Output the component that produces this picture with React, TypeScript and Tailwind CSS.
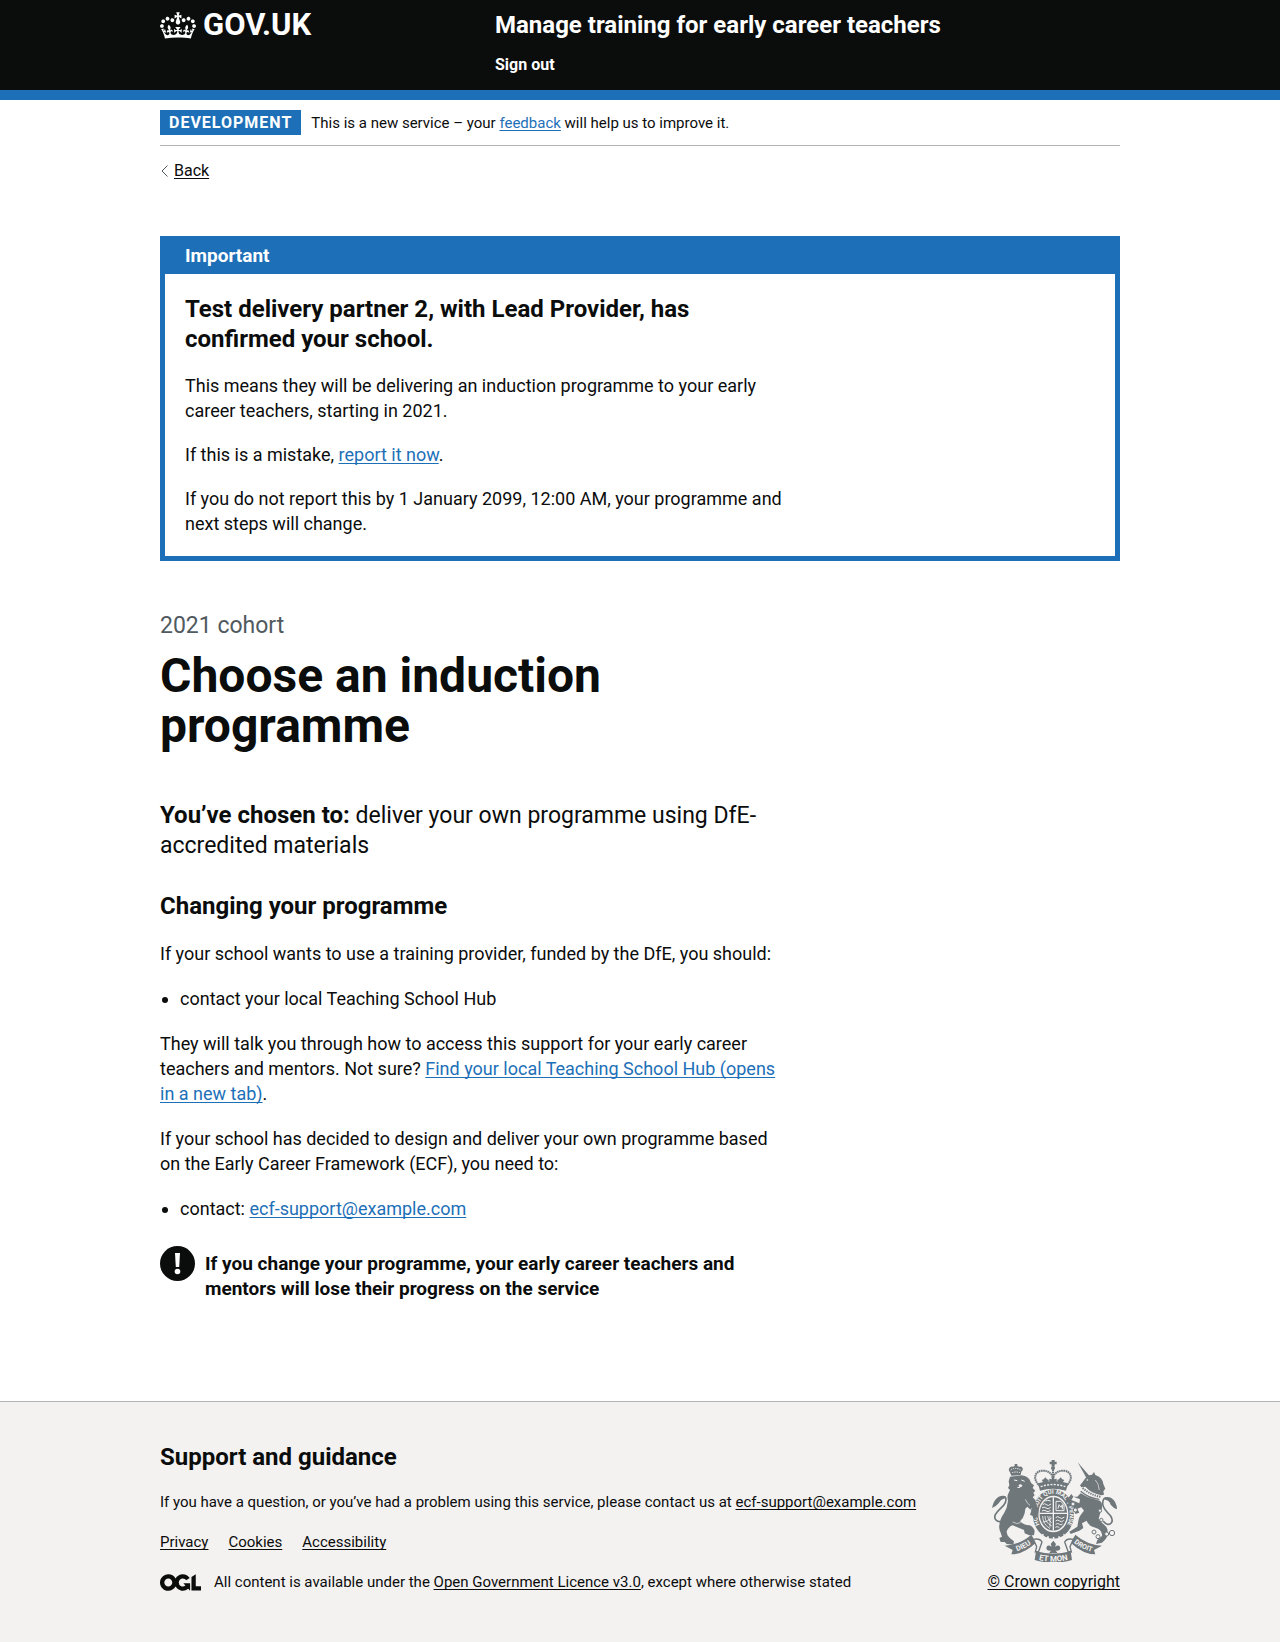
import React from "react";

const linkBlue = "text-[#1d70b8] underline underline-offset-2 decoration-1 [text-decoration-skip-ink:none]";
const linkBlack = "text-[#0b0c0c] underline underline-offset-2 decoration-1 [text-decoration-skip-ink:none]";

function Crown() {
  return (
    <svg aria-hidden="true" viewBox="0 0 132 97" className="h-[27px] w-9 fill-current">
      <path
        fillRule="evenodd"
        d="M25 30.2c3.5 1.5 7.7-.2 9.1-3.7 1.5-3.6-.2-7.8-3.9-9.2-3.6-1.4-7.6.3-9.1 3.9-1.4 3.5.3 7.5 3.9 9zM9 39.5c3.6 1.5 7.8-.2 9.2-3.7 1.5-3.6-.2-7.8-3.9-9.1-3.6-1.5-7.6.2-9.1 3.8-1.4 3.5.3 7.5 3.8 9zM4.4 57.2c3.5 1.5 7.7-.2 9.1-3.8 1.5-3.6-.2-7.7-3.9-9.1-3.5-1.5-7.6.3-9.1 3.8-1.4 3.5.3 7.6 3.9 9.1zm38.3-21.4c3.5 1.5 7.7-.2 9.1-3.8 1.5-3.6-.2-7.7-3.9-9.1-3.6-1.5-7.6.3-9.1 3.8-1.3 3.6.4 7.7 3.9 9.1zm64.4-5.6c-3.6 1.5-7.8-.2-9.1-3.7-1.5-3.6.2-7.8 3.8-9.2 3.6-1.4 7.7.3 9.2 3.9 1.3 3.5-.4 7.5-3.9 9zm15.9 9.3c-3.6 1.5-7.7-.2-9.1-3.7-1.5-3.6.2-7.8 3.7-9.1 3.6-1.5 7.7.2 9.2 3.8 1.5 3.5-.3 7.5-3.8 9zm4.7 17.7c-3.6 1.5-7.8-.2-9.2-3.8-1.5-3.6.2-7.7 3.9-9.1 3.6-1.5 7.7.3 9.2 3.8 1.3 3.5-.4 7.6-3.9 9.1zM89.3 35.8c-3.6 1.5-7.8-.2-9.2-3.8-1.4-3.6.2-7.7 3.9-9.1 3.6-1.5 7.7.3 9.2 3.8 1.4 3.6-.3 7.7-3.9 9.1zM69.7 17.7l8.9 4.7V9.3l-8.9 2.8c-.2-.3-.5-.6-.9-.9L72.4 0H59.6l3.5 11.2c-.3.3-.6.5-.9.9l-8.8-2.8v13.1l8.8-4.7c.3.3.6.7.9.9l-5 15.4v.1c-.2.8-.4 1.6-.4 2.4 0 4.1 3.1 7.5 7 8.1h.2c.3 0 .7.1 1 .1.4 0 .7 0 1-.1h.2c4-.6 7.1-4.1 7.1-8.1 0-.8-.1-1.7-.4-2.4V34l-5.1-15.4c.4-.2.7-.6 1-.9zM66 92.8c16.9 0 32.8 1.1 47.1 3.2 4-16.9 8.9-26.7 14-33.5l-9.6-3.4c1 4.9 1.1 7.2 0 10.2-1.5-1.4-3-4.3-4.2-8.7L108.6 76c2.8-2 5-3.2 7.5-3.3-4.4 9.4-10 11.9-13.6 11.2-4.3-.8-6.3-4.6-5.6-7.9 1-4.7 5.7-5.9 8-.5 4.3-8.7-3-11.4-7.6-8.8 7.1-7.2 7.9-13.5 2.1-21.1-8 6.1-8.1 12.3-4.5 20.8-4.7-5.4-12.1-2.5-9.5 6.2 3.4-5.2 7.9-2 7.2 3.1-.6 4.3-6.4 7.8-13.5 7.2-10.3-.9-10.9-8-11.2-13.8 2.5-.5 7.1 1.8 11 7.3L80.2 60c-4.1 4.4-8 5.3-12.3 5.4 1.4-4.4 8-11.6 8-11.6H55.5s6.4 7.2 7.9 11.6c-4.2-.1-8-1-12.3-5.4l1.4 16.4c3.9-5.5 8.5-7.7 10.9-7.3-.3 5.8-.9 12.8-11.1 13.8-7.2.6-12.9-2.9-13.5-7.2-.7-5 3.8-8.3 7.1-3.1 2.7-8.7-4.6-11.6-9.4-6.2 3.7-8.5 3.6-14.7-4.6-20.8-5.8 7.6-5 13.9 2.2 21.1-4.7-2.6-11.9.1-7.7 8.8 2.3-5.5 7.1-4.2 8.1.5.7 3.3-1.3 7.1-5.7 7.9-3.5.7-9-1.8-13.5-11.2 2.5.1 4.7 1.3 7.5 3.3l-4.7-15.4c-1.2 4.4-2.7 7.2-4.3 8.7-1.1-3-.9-5.3 0-10.2l-9.5 3.4c5 6.9 9.9 16.7 14 33.5 14.8-2.1 30.8-3.2 47.7-3.2z"
      />
    </svg>
  );
}

function OglLogo() {
  return (
    <svg aria-hidden="true" viewBox="0 0 483.2 195.7" className="h-[17px] w-[41px] shrink-0 fill-current">
      <path d="M421.5 142.8V.1l-50.7 32.3v161.1h112.4v-50.7zm-122.3-9.6A47.12 47.12 0 0 1 221 97.8c0-26 21.1-47.1 47.1-47.1 16.7 0 31.4 8.7 39.7 21.8l42.7-27.2A97.63 97.63 0 0 0 268.1 0c-36.5 0-68.3 20.1-85.1 49.7A98 98 0 0 0 97.8 0C43.9 0 0 43.9 0 97.8s43.9 97.8 97.8 97.8c36.5 0 68.3-20.1 85.1-49.7a97.76 97.76 0 0 0 149.6 25.4l19.4 22.2h3v-87.8h-80l24.3 27.5zM97.8 145c-26 0-47.1-21.1-47.1-47.1s21.1-47.1 47.1-47.1 47.1 21.1 47.1 47.1S123.8 145 97.8 145" />
    </svg>
  );
}

function RoyalArms() {
  const g = "#6f777b";
  const bg = "#f3f2f1";
  return (
    <svg aria-hidden="true" viewBox="0 0 375 306" className="h-[102px] w-[125px]">
      <defs>
        <path id="garter" d="M149 203 A49 60 0 1 1 219 203" />
        <path id="dieu" d="M62 277 Q98 270 128 243" />
        <path id="mon" d="M134 298 Q184 312 234 298" />
        <path id="droit" d="M240 243 Q270 270 306 277" />
      </defs>
      {/* imperial crown */}
      <g fill={g}>
        <path d="M179 0h9v5h6v8h-6v6h-9v-6h-6V5h6z" />
        <circle cx="183" cy="24" r="6" />
        <path d="M138 70Q183 56 228 70L222 92Q183 80 144 92z" />
        <path d="M160 52l5 6 6 2-4 6 2 8h-18l2-8-4-6 6-2zM206 52l5 6 6 2-4 6 2 8h-18l2-8-4-6 6-2zM178 52h10l-2 6 8-2v10l-6-2 2 8h-14l2-8-6 2V56l8 2z" />
      </g>
      <g fill="none" stroke={g} strokeWidth="6" strokeDasharray="5 1.5">
        <path d="M144 78C122 60 126 34 150 32 170 31 180 42 183 54" />
        <path d="M222 78C244 60 240 34 216 32 196 31 186 42 183 54" />
        <path d="M183 28V54" />
      </g>
      <path d="M146 80Q183 67 220 80" fill="none" stroke={bg} strokeWidth="4" strokeDasharray="6 4" />
      {/* garter and quartered shield */}
      <ellipse cx="184" cy="162" rx="62" ry="74" fill={g} />
      <ellipse cx="184" cy="162" rx="45" ry="55" fill={bg} />
      <ellipse cx="184" cy="162" rx="41" ry="50" fill={g} />
      <path d="M184 112v100M143 160h82" stroke={bg} strokeWidth="4" />
      <g fill="none" stroke={bg} strokeWidth="3">
        <path d="M152 134q6-6 11 0t14-2M150 144q6-6 12 0t14-2M150 153q6-5 12 0t14-2M160 123q6-4 16 0" />
        <path d="M192 124h14l10 10v18h-24z" />
        <path d="M198 146l3-12 6 8 4-8v14" />
        <path d="M152 168q0 24 22 38M159 168q0 20 20 30M167 168q0 12 12 20M174 168v34M152 186q14 0 27-12" strokeWidth="2.500" />
        <path d="M191 173q6-6 12 0t14-2M191 183q6-6 12 0t12-2M191 193q6-5 12 0t8-2M190 202q5-4 12 0" />
      </g>
      <text fill={bg} fontFamily="Roboto, sans-serif" fontWeight="700" fontSize="18">
        <textPath href="#garter" startOffset="50%" textAnchor="middle">HONI SOIT QUI MAL Y PENSE</textPath>
      </text>
      <path d="M150 224q34 20 68 0" stroke={bg} strokeWidth="6" fill="none" strokeDasharray="5 12" />
      {/* lion */}
      <g fill={g}>
        <path d="M52 24q4-6 10-4l6-2v-6h8v6l6 2q8-2 10 5 2 6-4 10l-2 10-28 2-4-10q-6-6-2-13z" />
        <path d="M54 50L88 46Q104 48 112 58L118 70 126 76 122 84 130 92 124 98 128 106 122 112 130 120 134 136 140 148Q140 160 134 172L126 178 122 168 114 164 118 152 106 140 100 146 98 160Q94 176 84 184 96 196 112 196 122 198 128 212L126 226 112 226 98 220 96 210 76 202 62 196Q50 200 44 214 44 228 56 236L66 244 64 254 44 252 38 246 26 246 22 234 30 230 26 218Q20 206 22 196 24 176 36 160 46 144 48 122 44 108 50 98L54 90 48 84 52 76 50 64z" />
        <path d="M0 144Q4 120 20 110 34 104 42 110 44 113 36 116 26 118 20 130 12 140 0 144z" />
      </g>
      <path d="M34 182C16 190 4 178 10 164 18 148 34 142 40 128 44 116 42 110 34 110" fill="none" stroke={g} strokeWidth="5" />
      <g fill="none" stroke={bg} strokeWidth="3">
        <path d="M56 30q14-10 30 0M60 38q12-4 24 0" strokeDasharray="4 3" />
        <path d="M66 60l10 2M88 60l10 4M76 82q8 4 14-6" />
      </g>
      <ellipse cx="85" cy="77" rx="5" ry="4" fill={bg} />
      <path d="M100 118q6 14 14 18M112 150l8-4M62 186q12 8 24 2" fill="none" stroke={bg} strokeWidth="2" />
      {/* unicorn */}
      <path d="M257 7l35 40-9 6z" fill={g} />
      <g fill={g}>
        <path d="M264 76L272 66Q280 52 292 46L300 44 306 36 310 45Q332 52 334 72L340 86 334 94 336 104 328 106Q298 100 284 84L280 80 268 82z" />
        <path d="M256 110L266 100Q296 118 324 122 332 128 330 144 324 160 320 176 328 188 338 196 350 204 346 226 344 238 330 248L312 252 316 240 330 228Q330 212 318 206L296 198Q286 190 284 182L270 190 274 204 262 212 236 222 232 215 256 200 260 178Q262 168 276 152L268 142 256 146 262 158 250 162 244 142 230 134 226 118 238 102 244 110 238 120 262 130 264 118 244 110z" />
        <path d="M375 148Q374 124 358 114 344 108 334 115 334 119 342 120 352 122 356 134 364 144 375 148z" />
      </g>
      <path d="M334 184C350 204 368 188 356 168 346 156 334 148 332 132 332 120 334 114 342 114" fill="none" stroke={g} strokeWidth="5" />
      <path d="M272 84Q296 106 326 110" fill="none" stroke={g} strokeWidth="6" strokeDasharray="4 3" />
      <path d="M266 94Q292 116 322 118" fill="none" stroke={g} strokeWidth="4" />
      <circle cx="286" cy="60" r="2.500" fill={bg} />
      <path d="M310 60q10 10 12 30" fill="none" stroke={bg} strokeWidth="2" />
      <g fill={bg} stroke={g} strokeWidth="3">
        <circle cx="243" cy="132" r="6" />
        <circle cx="250" cy="150" r="6" />
        <circle cx="324" cy="152" r="5" />
        <circle cx="328" cy="180" r="5" />
        <circle cx="306" cy="216" r="6" />
        <circle cx="318" cy="230" r="6" />
        <circle cx="344" cy="222" r="6" />
        <circle cx="360" cy="219" r="8" />
      </g>
      {/* motto ribbon */}
      <g fill={g}>
        <path d="M38 257Q84 254 118 224L132 248Q94 283 58 283L62 270z" />
        <path d="M330 257Q284 254 250 224L236 248Q274 283 310 283L306 270z" />
        <path d="M132 274Q184 288 236 274L240 300Q184 316 128 300z" />
        <path d="M184 242l8 10-3 8q14-8 16 4-1 10-14 8l6 8h-26l6-8q-13 2-14-8 2-12 16-4l-3-8z" />
      </g>
      <g fill={bg} stroke={g} strokeWidth="4">
        <path d="M124 238Q144 234 150 246L140 274 130 276 134 260z" />
        <path d="M244 238Q224 234 218 246L228 274 238 276 234 260z" />
      </g>
      <g fill={bg} fontFamily="Roboto, sans-serif" fontWeight="700" fontSize="22" textAnchor="middle">
        <text><textPath href="#dieu" startOffset="50%">DIEU</textPath></text>
        <text fontSize="24"><textPath href="#mon" startOffset="50%">ET MON</textPath></text>
        <text fontSize="21"><textPath href="#droit" startOffset="50%">DROIT</textPath></text>
      </g>
    </svg>
  );
}

function Header() {
  return (
    <header className="border-b-10 border-[#1d70b8] bg-[#0b0c0c] text-white">
      <div className="mx-auto flex max-w-[960px] items-start pb-[15px]">
        <a href="#home" className="mt-[10px] flex w-[335px] shrink-0 items-center gap-[7px] text-[31px] leading-[30px] font-bold">
          <Crown />
          <span>GOV.UK</span>
        </a>
        <div className="flex flex-col items-start pt-[10px]">
          <a href="#service" className="text-[24px] leading-[30px] font-bold">
            Manage training for early career teachers
          </a>
          <nav className="mt-[15px]">
            <a href="#signout" className="block text-[16px] leading-5 font-bold">Sign out</a>
          </nav>
        </div>
      </div>
    </header>
  );
}

function Notification() {
  return (
    <section aria-labelledby="banner-title" className="border-5 border-[#1d70b8] bg-[#1d70b8]">
      <h2 id="banner-title" className="px-5 pt-[2px] pb-[6px] text-[19px] leading-[25px] font-bold text-white">Important</h2>
      <div className="bg-white p-5">
        <div className="flex max-w-[605px] flex-col gap-[19px]">
          <h3 className="max-w-[540px] text-[24px] leading-[30px] font-bold">
            Test delivery partner 2, with Lead Provider, has confirmed your school.
          </h3>
          <p>This means they will be delivering an induction programme to your early career teachers, starting in 2021.</p>
          <p>If this is a mistake, <a href="#report" className={linkBlue}>report it now</a>.</p>
          <p>If you do not report this by 1 January 2099, 12:00 AM, your programme and next steps will change.</p>
        </div>
      </div>
    </section>
  );
}

export default function App() {
  return (
    <div className="bg-white font-['Roboto',sans-serif] text-[18px] leading-[25px] text-[#0b0c0c]">
      <Header />
      <div className="mx-auto max-w-[960px]">
        <div className="flex items-center gap-[10px] border-b border-[#b1b4b6] py-[10px] text-[15px] leading-5">
          <strong className="bg-[#1d70b8] px-[9px] pt-[3px] pb-[2px] text-[16px] tracking-[1px] text-white uppercase">Development</strong>
          <span>This is a new service – your <a href="#feedback" className={linkBlue}>feedback</a> will help us to improve it.</span>
        </div>
        <a href="#back" className="mt-[15px] flex w-fit items-center gap-[6px] pl-[1px] text-[16px] leading-5">
          <svg aria-hidden="true" viewBox="0 0 7 12" className="h-3 w-[7px] fill-none stroke-[#505a5f]"><path d="M6.500 .5L1 6l5.500 5.500" /></svg>
          <span className={linkBlack}>Back</span>
        </a>
        <main className="pt-[55px] pb-[100px]">
          <Notification />
          <div className="mt-[50px] max-w-[630px]">
            <span className="block text-[23px] leading-[30px] text-[#505a5f]">2021 cohort</span>
            <h1 className="mt-[10px] max-w-[540px] text-[48px] leading-[50px] font-bold">Choose an induction programme</h1>
            <p className="mt-[50px] text-[23px] leading-[30px]"><strong className="text-[24px] leading-6">You’ve chosen to:</strong> deliver your own programme using DfE-accredited materials</p>
            <h2 className="mt-[30px] text-[24px] leading-[30px] font-bold">Changing your programme</h2>
            <div className="mt-5 flex flex-col gap-5">
              <p>If your school wants to use a training provider, funded by the DfE, you should:</p>
              <ul className="list-disc pl-5"><li>contact your local Teaching School Hub</li></ul>
              <p>
                They will talk you through how to access this support for your early career teachers and mentors. Not sure?{" "}
                <a href="#hub" className={linkBlue}>Find your local Teaching School Hub (opens in a new tab)</a>.
              </p>
              <p>If your school has decided to design and deliver your own programme based on the Early Career Framework (ECF), you need to:</p>
              <ul className="list-disc pl-5"><li>contact: <a href="mailto:ecf-support@example.com" className={linkBlue}>ecf-support@example.com</a></li></ul>
            </div>
            <div className="mt-[25px] flex items-start gap-[10px]">
              <svg aria-hidden="true" viewBox="0 0 35 35" className="size-[35px] shrink-0">
                <circle cx="17.500" cy="17.500" r="17.500" fill="#0b0c0c" />
                <path d="M15 7h5l-.8 14h-3.400z" fill="#fff" />
                <circle cx="17.500" cy="25.500" r="2.800" fill="#fff" />
              </svg>
              <strong className="mt-[5px] max-w-[540px] text-[19px]">If you change your programme, your early career teachers and mentors will lose their progress on the service</strong>
            </div>
          </div>
        </main>
      </div>
      <footer className="border-t border-[#b1b4b6] bg-[#f3f2f1] pt-10 pb-[50px] text-[15px] leading-5">
        <div className="mx-auto flex max-w-[960px] items-end justify-between">
          <div>
            <h2 className="text-[24px] leading-[30px] font-bold">Support and guidance</h2>
            <p className="mt-5">If you have a question, or you’ve had a problem using this service, please contact us at <a href="mailto:ecf-support@example.com" className={linkBlack}>ecf-support@example.com</a></p>
            <nav className="mt-5 flex gap-5">
              <a href="#privacy" className={linkBlack}>Privacy</a>
              <a href="#cookies" className={linkBlack}>Cookies</a>
              <a href="#accessibility" className={linkBlack}>Accessibility</a>
            </nav>
            <div className="mt-5 flex items-center gap-[13px]">
              <OglLogo />
              <span>All content is available under the <a href="#licence" className={linkBlack}>Open Government Licence v3.0</a>, except where otherwise stated</span>
            </div>
          </div>
          <a href="#copyright" className="flex shrink-0 flex-col items-end gap-[10px] text-[16px]">
            <span className="pr-[3px]"><RoyalArms /></span>
            <span className={linkBlack}>© Crown copyright</span>
          </a>
        </div>
      </footer>
    </div>
  );
}
